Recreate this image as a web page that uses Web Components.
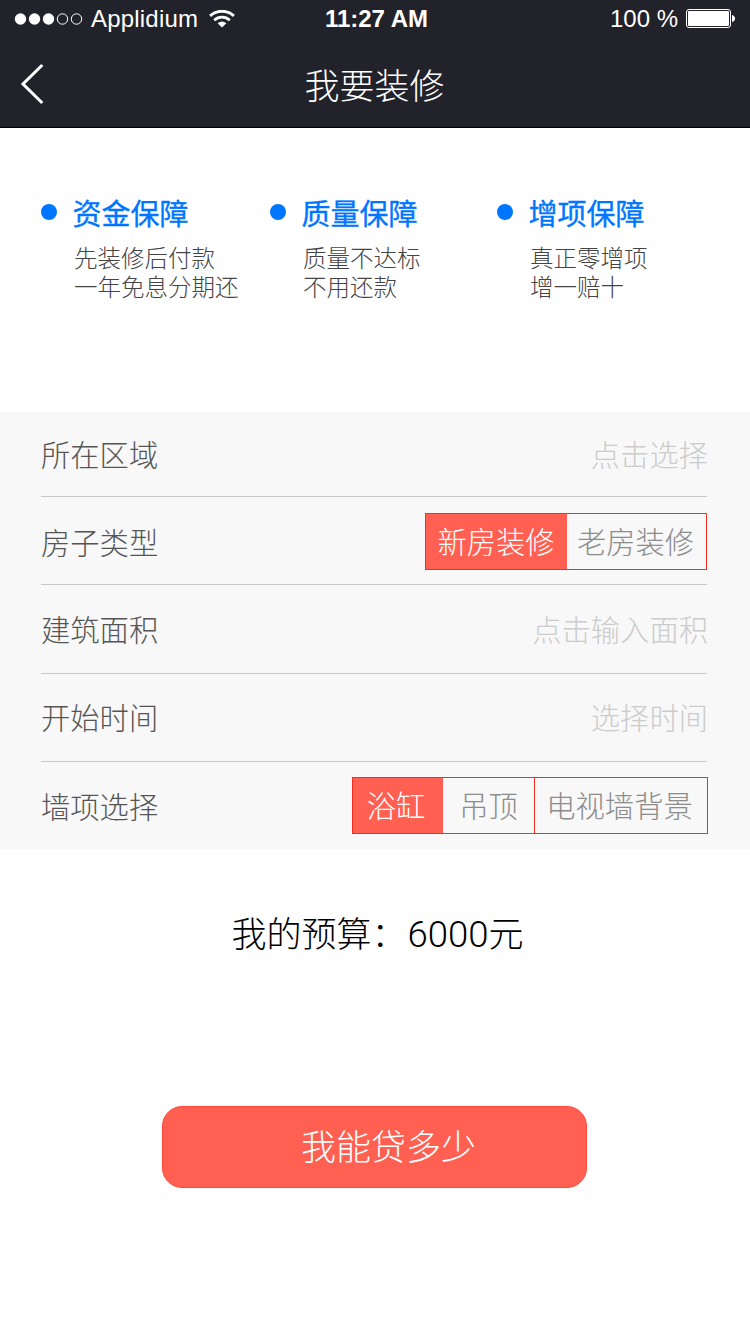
<!DOCTYPE html>
<html lang="zh-CN">
<head>
<meta charset="utf-8">
<title>我要装修</title>
<style>
  body {
    margin: 0;
    background: #fff;
    font-family: "Noto Sans CJK SC", sans-serif;
    font-weight: 300;
    --accent: #ff6052;
    --accent-line: #f52e1e;
    --bar: #22222b;
  }
</style>
</head>
<body>
<renovation-page></renovation-page>

<script>
'use strict';

// Attaches an open shadow root filled with |html|.
class BaseElement extends HTMLElement {
  constructor(html) {
    super();
    this.attachShadow({ mode: 'open' }).innerHTML = html;
  }
}

class StatusBar extends BaseElement {
  constructor() {
    super(`
      <style>
        :host {
          display: grid;
          grid-template-columns: 1fr auto 1fr;
          align-items: center;
          height: 38px;
          padding: 0 15px 0 14px;
          background: var(--bar);
          color: #fff;
          font: 400 24px/38px "Liberation Sans", Arial, sans-serif;
        }
        div { display: flex; align-items: center; }
        svg { display: block; flex: none; }
        .carrier { letter-spacing: 0.2px; margin: 0 11px 0 8px; }
        .time { font-weight: 700; font-size: 24px; padding-left: 4px; }
        .power { justify-content: flex-end; }
        .power span { margin-right: 8px; }
      </style>
      <div>
        <svg width="69" height="14" viewBox="0 0 69 14">
          <g fill="#fff"><circle cx="6.5" cy="7" r="5.7"/><circle cx="20.5" cy="7" r="5.7"/><circle cx="34.5" cy="7" r="5.7"/></g>
          <g fill="none" stroke="#fff"><circle cx="48.5" cy="7" r="5.2"/><circle cx="62.5" cy="7" r="5.2"/></g>
        </svg>
        <span class="carrier">Applidium</span>
        <svg width="26" height="19" viewBox="0 0 26 19">
          <path d="M1.1 5.8A18 18 0 0 1 24.9 5.8" fill="none" stroke="#fff" stroke-width="3"/>
          <path d="M5.2 10.2A11.5 11.5 0 0 1 20.8 10.2" fill="none" stroke="#fff" stroke-width="2.8"/>
          <path d="M13 17.6L8.6 13.2Q13 9.9 17.4 13.2Z" fill="#fff"/>
        </svg>
      </div>
      <span class="time">11:27 AM</span>
      <div class="power">
        <span>100 %</span>
        <svg width="49" height="20" viewBox="0 0 49 20">
          <rect x="0.5" y="0.5" width="44" height="18" rx="2.5" fill="none" stroke="#fff"/>
          <rect x="2" y="2" width="41" height="15" rx="1" fill="#fff"/>
          <path d="M46 6Q49 7 49 9.5T46 13Z" fill="#fff"/>
        </svg>
      </div>
    `);
  }
}

class NavBar extends BaseElement {
  constructor() {
    super(`
      <style>
        :host {
          display: grid;
          grid-template-columns: 60px 1fr 61px;
          align-items: center;
          height: 89px;
          border-bottom: 1px solid #000;
          background: var(--bar);
          color: #fff;
          font-size: 35px;
          line-height: 91px;
          text-align: center;
        }
        svg { display: block; margin-left: 20px; }
      </style>
      <svg width="24" height="42" viewBox="0 0 24 42">
        <path d="M22.3 2L3 21L22.3 40" fill="none" stroke="#fff" stroke-width="3"/>
      </svg>
      <slot></slot>
    `);
  }
}

// One selling point: bullet, blue heading and a two line note.
class FeatureItem extends BaseElement {
  constructor() {
    super(`
      <style>
        :host { display: grid; grid-template-columns: 16px auto; column-gap: 15.5px; align-content: start; }
        i { width: 16px; height: 16px; border-radius: 50%; background: #0076ff; margin-top: 12px; }
        h3 {
          margin: 0;
          font-size: 29px;
          line-height: 41px;
          font-weight: 400;
          color: #0076ff;
          -webkit-text-stroke: 0.35px #0076ff;
        }
        p {
          grid-column: 2;
          margin: 10px 0 0 1.5px;
          font-size: 23.5px;
          line-height: 29px;
          color: #444;
          white-space: pre;
        }
      </style>
      <i></i>
      <h3><slot name="title"></slot></h3>
      <p><slot></slot></p>
    `);
  }
}

class FormRow extends BaseElement {
  static get observedAttributes() {
    return ['label', 'hint'];
  }

  constructor() {
    super(`
      <style>
        :host {
          display: flex;
          align-items: center;
          justify-content: space-between;
          box-sizing: border-box;
          height: 88px;
          border-bottom: 1px solid #c8c8c8;
          font-size: 29.3px;
          line-height: 44px;
          color: #555;
        }
        :host(:first-child) { height: 85px; padding-bottom: 3px; }
        :host(:nth-child(3)) { height: 89px; padding-bottom: 2px; }
        :host(:nth-child(4)) { padding-bottom: 3px; }
        :host(:last-child) { height: 87px; padding-bottom: 1px; border-bottom: 0; }
        #hint { color: #ccc; margin-right: -1px; }
      </style>
      <span id="label"></span>
      <slot><span id="hint"></span></slot>
    `);
  }

  attributeChangedCallback(name, oldValue, newValue) {
    this.shadowRoot.getElementById(name).textContent = newValue;
  }
}

class SegmentGroup extends BaseElement {
  constructor() {
    super(`
      <style>
        :host {
          display: flex;
          box-sizing: border-box;
          height: 57px;
          border: 1px solid var(--accent-line);
        }
      </style>
      <slot></slot>
    `);
    this.addEventListener('click', (e) => this.select(e.target));
  }

  select(item) {
    if (item == this)
      return;
    for (let child of this.children)
      child.toggleAttribute('selected', child == item);
  }
}

class SegmentItem extends BaseElement {
  constructor() {
    super(`
      <style>
        :host {
          box-sizing: border-box;
          width: var(--w);
          padding-right: var(--pad, 2px);
          line-height: 52px;
          text-align: center;
          white-space: nowrap;
          color: #8c8c8c;
        }
        :host(:not(:first-child)) { border-left: 1px solid var(--accent-line); }
        :host([selected]) { background: var(--accent); color: #fff; }
        /* The first divider blends into the filled cell. */
        :host(:nth-child(2)) { border-left-color: var(--accent); }
      </style>
      <slot></slot>
    `);
  }
}

class ActionButton extends BaseElement {
  constructor() {
    super(`
      <style>
        :host { display: block; width: 425px; height: 82px; }
        button {
          width: 100%;
          height: 100%;
          padding: 0 0 6px 28px;
          border: 1px solid #ff4a3b;
          border-radius: 20px;
          background: var(--accent);
          color: #fff;
          font: inherit;
          font-size: 35px;
        }
      </style>
      <button><slot></slot></button>
    `);
  }
}

class RenovationPage extends BaseElement {
  constructor() {
    super(`
      <style>
        :host { display: block; width: 750px; height: 1334px; overflow: hidden; }
        .features {
          display: grid;
          grid-template-columns: 229px 227px auto;
          box-sizing: border-box;
          height: 284px;
          padding: 64px 0 0 41px;
        }
        .form { padding: 0 43px 0 41px; background: #f8f8f8; height: 437px; }
        .budget {
          height: 257px;
          padding-left: 5px;
          font-size: 35px;
          line-height: 166px;
          text-align: center;
          color: #000;
        }
        .budget b { font: 300 36.5px/1 Roboto, sans-serif; margin-left: 1px; }
        .house { margin-top: 2px; }
        .extras { margin-right: -1px; }
        action-button { margin-left: 162px; }
      </style>
      <status-bar></status-bar>
      <nav-bar>我要装修</nav-bar>
      <div class="features">
        <feature-item><span slot="title">资金保障</span>先装修后付款<br>一年免息分期还</feature-item>
        <feature-item><span slot="title">质量保障</span>质量不达标<br>不用还款</feature-item>
        <feature-item><span slot="title">增项保障</span>真正零增项<br>增一赔十</feature-item>
      </div>
      <div class="form">
        <form-row label="所在区域" hint="点击选择"></form-row>
        <form-row label="房子类型">
          <segment-group class="house">
            <segment-item selected style="--w: 140px; --pad: 0px">新房装修</segment-item>
            <segment-item style="--w: 140px">老房装修</segment-item>
          </segment-group>
        </form-row>
        <form-row label="建筑面积" hint="点击输入面积"></form-row>
        <form-row label="开始时间" hint="选择时间"></form-row>
        <form-row label="墙项选择">
          <segment-group class="extras">
            <segment-item selected style="--w: 89px; --pad: 3px">浴缸</segment-item>
            <segment-item style="--w: 92px; --pad: 0px">吊顶</segment-item>
            <segment-item style="--w: 173px; --pad: 3px">电视墙背景</segment-item>
          </segment-group>
        </form-row>
      </div>
      <div class="budget">我的预算：<b>6000</b>元</div>
      <action-button>我能贷多少</action-button>
    `);
  }
}

customElements.define('status-bar', StatusBar);
customElements.define('nav-bar', NavBar);
customElements.define('feature-item', FeatureItem);
customElements.define('form-row', FormRow);
customElements.define('segment-group', SegmentGroup);
customElements.define('segment-item', SegmentItem);
customElements.define('action-button', ActionButton);
customElements.define('renovation-page', RenovationPage);
</script>
</body>
</html>
